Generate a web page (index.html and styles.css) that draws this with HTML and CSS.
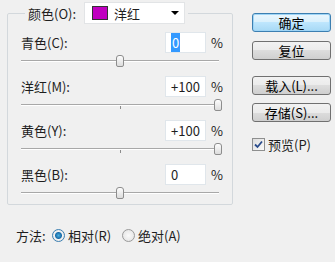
FILE: index.html
```html
<!DOCTYPE html>
<html lang="zh">
<head>
  <meta charset="UTF-8">
  <title>可选颜色</title>
  <link rel="stylesheet" href="styles.css">
</head>
<body>
<div class="dialog">
  <div class="left">
    <fieldset class="group">
      <legend class="legend">
        <span class="legend-label">颜色(O):</span>
        <div class="combo">
          <span class="swatch"></span>
          <span class="combo-text">洋红</span>
          <span class="arrow"></span>
        </div>
      </legend>

      <div class="row">
        <span class="label">青色(C):</span>
        <div class="field"><span class="sel">0</span></div>
        <span class="pct">%</span>
      </div>
      <div class="slider">
        <div class="track"></div>
        <span class="thumb" style="left:95px"></span>
      </div>

      <div class="row">
        <span class="label">洋红(M):</span>
        <div class="field">+100</div>
        <span class="pct">%</span>
      </div>
      <div class="slider">
        <div class="track"></div>
        <span class="tick"></span>
        <span class="thumb" style="left:193px"></span>
      </div>

      <div class="row">
        <span class="label">黄色(Y):</span>
        <div class="field">+100</div>
        <span class="pct">%</span>
      </div>
      <div class="slider">
        <div class="track"></div>
        <span class="tick"></span>
        <span class="thumb" style="left:193px"></span>
      </div>

      <div class="row">
        <span class="label">黑色(B):</span>
        <div class="field">0</div>
        <span class="pct">%</span>
      </div>
      <div class="slider last">
        <div class="track"></div>
        <span class="thumb" style="left:95px"></span>
      </div>
    </fieldset>

    <div class="method">
      <span class="method-label">方法:</span>
      <span class="radio on"></span><span class="opt">相对(R)</span>
      <span class="radio"></span><span class="opt">绝对(A)</span>
    </div>
  </div>

  <div class="right">
    <button class="btn default">确定</button>
    <button class="btn">复位</button>
    <button class="btn first-io">载入(L)...</button>
    <button class="btn">存储(S)...</button>
    <div class="preview">
      <span class="check">
        <svg width="9" height="9" viewBox="0 0 9 9"><path d="M1 4.5 L3.5 7 L8 1.5" fill="none" stroke="#2a4c8c" stroke-width="1.8"/></svg>
      </span>
      <span>预览(P)</span>
    </div>
  </div>
</div>
</body>
</html>
```

FILE: styles.css
```css
body {
  margin: 0;
  background: #f0f0f0;
  font-family: "Noto Sans CJK SC", "DejaVu Sans", sans-serif;
  font-size: 13px;
  color: #1e1e1e;
}
.dialog {
  display: flex;
  padding: 2px 0 0 7px;
}
.left { width: 226px; }
.group {
  margin: 0;
  border: 1px solid #d3d8dc;
  border-radius: 2px;
  padding: 7px 10px 0 13px;
  min-width: 0;
}
.legend {
  display: flex;
  align-items: center;
  margin-left: 4px;
  padding: 0 3px;
  height: 22px;
}
.legend-label { width: 56px; }
.combo {
  width: 99px;
  height: 20px;
  background: #fff;
  border: 1px solid #e2e4e6;
  display: flex;
  align-items: center;
}
.swatch {
  width: 14px;
  height: 12px;
  background: #c000c0;
  border: 1px solid #333;
  margin-left: 7px;
}
.combo-text { margin-left: 6px; flex: 1; }
.arrow {
  width: 0;
  height: 0;
  border-left: 4px solid transparent;
  border-right: 4px solid transparent;
  border-top: 4px solid #000;
  margin-right: 5px;
}
.row {
  display: flex;
  align-items: center;
  height: 22px;
}
.label { flex: 1; }
.field {
  width: 34px;
  height: 19px;
  background: #fff;
  border: 1px solid #e0e6eb;
  padding-left: 5px;
  line-height: 19px;
}
.sel {
  background: #3399ff;
  color: #fff;
  padding: 0 1px;
}
.pct { margin-left: 5px; width: 11px; }
.slider {
  position: relative;
  box-sizing: border-box;
  height: 22px;
  padding-top: 7px;
}
.slider.last { height: 19px; }
.track {
  margin-right: 3px;
  height: 0;
  border-top: 1px solid #a8a8a8;
  border-bottom: 1px solid #fff;
}
.tick {
  position: absolute;
  left: 99px;
  top: 9px;
  width: 1px;
  height: 3px;
  background: #8c8c8c;
}
.thumb {
  position: absolute;
  top: 2px;
  width: 6px;
  height: 10px;
  border: 1px solid #8d8d8d;
  border-radius: 3px 3px 2px 2px;
  background: linear-gradient(#fdfdfd, #dcdcdc);
}
.method {
  display: flex;
  align-items: center;
  margin: 21px 0 0 9px;
}
.method-label { width: 36px; }
.radio {
  width: 11px;
  height: 11px;
  border: 1px solid #9a9a9a;
  border-radius: 50%;
  background: radial-gradient(#fafafa, #e0e0e0);
  margin-right: 3px;
}
.radio.on {
  background: radial-gradient(circle, #4ab0e0 0, #1a6ca8 3px, #f4f4f4 4px, #e4e4e4 6px);
  border-color: #3c7fb1;
}
.opt { margin-right: 11px; }
.right {
  display: flex;
  flex-direction: column;
  margin-left: 19px;
  padding-top: 11px;
}
.btn {
  width: 79px;
  height: 19px;
  font: inherit;
  line-height: 15px;
  padding: 0;
  color: #000;
  border: 1px solid #707070;
  border-radius: 3px;
  background: linear-gradient(#f2f2f2 0, #ebebeb 50%, #dddddd 50%, #cfcfcf 100%);
  margin-bottom: 9px;
}
.btn.default {
  border-color: #3c7fb1;
  box-shadow: inset 0 0 0 1px #9fd5f6;
  background: linear-gradient(#eaf6fd 0, #d9f0fc 50%, #bee6fd 50%, #a7d9f5 100%);
}
.btn.first-io { margin-top: 7px; margin-bottom: 8px; }
.preview {
  display: flex;
  align-items: center;
  margin-top: 4px;
}
.check {
  width: 11px;
  height: 11px;
  border: 1px solid #8e8f8f;
  background: linear-gradient(135deg, #dedede, #fafafa);
  margin-right: 3px;
  display: flex;
  align-items: center;
  justify-content: center;
}
```
